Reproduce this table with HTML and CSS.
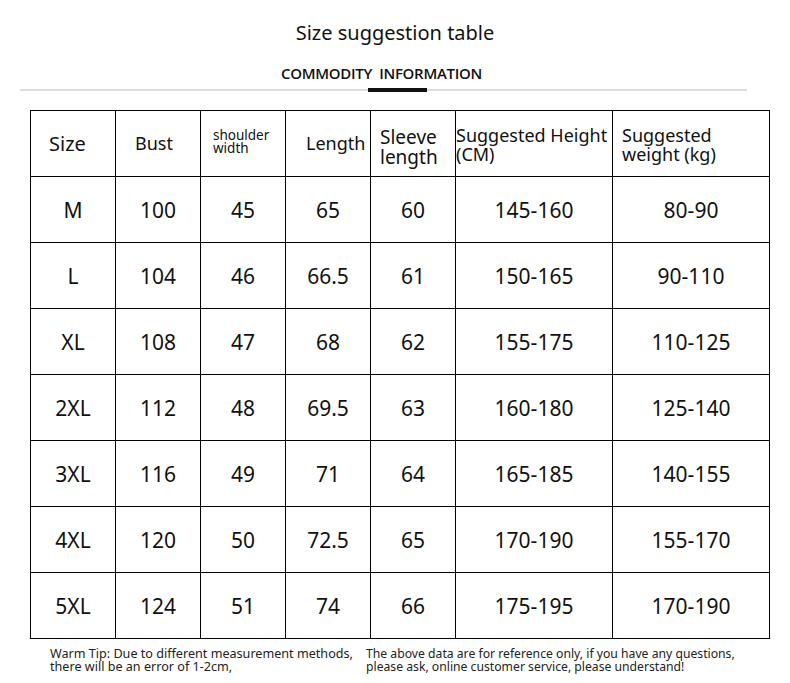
FILE: index.html
```html
<!DOCTYPE html>
<html>
<head>
<meta charset="utf-8">
<link rel="stylesheet" href="styles.css">
</head>
<body>
<div class="page">
  <h1 class="title">Size suggestion table</h1>
  <div class="subtitle">COMMODITY&nbsp; INFORMATION</div>
  <div class="rule"><span class="rule-bar"></span></div>
  <table class="sizes">
    <colgroup>
      <col class="c-n"><col class="c-n"><col class="c-n"><col class="c-n"><col class="c-n"><col class="c-w"><col class="c-w">
    </colgroup>
    <thead>
      <tr>
        <th class="h-size">Size</th>
        <th class="h-bust">Bust</th>
        <th class="h-shoulder">shoulder<br>width</th>
        <th class="h-length">Length</th>
        <th class="h-sleeve">Sleeve<br>length</th>
        <th class="h-height">Suggested Height<br>(CM)</th>
        <th class="h-weight">Suggested<br>weight (kg)</th>
      </tr>
    </thead>
    <tbody>
      <tr><td>M</td><td>100</td><td>45</td><td>65</td><td>60</td><td>145-160</td><td>80-90</td></tr>
      <tr><td>L</td><td>104</td><td>46</td><td>66.5</td><td>61</td><td>150-165</td><td>90-110</td></tr>
      <tr><td>XL</td><td>108</td><td>47</td><td>68</td><td>62</td><td>155-175</td><td>110-125</td></tr>
      <tr><td>2XL</td><td>112</td><td>48</td><td>69.5</td><td>63</td><td>160-180</td><td>125-140</td></tr>
      <tr><td>3XL</td><td>116</td><td>49</td><td>71</td><td>64</td><td>165-185</td><td>140-155</td></tr>
      <tr><td>4XL</td><td>120</td><td>50</td><td>72.5</td><td>65</td><td>170-190</td><td>155-170</td></tr>
      <tr><td>5XL</td><td>124</td><td>51</td><td>74</td><td>66</td><td>175-195</td><td>170-190</td></tr>
    </tbody>
  </table>
  <div class="notes">
    <p class="note note-left">Warm Tip: Due to different measurement methods,<br>there will be an error of 1-2cm,</p>
    <p class="note note-right">The above data are for reference only, if you have any questions,<br>please ask, online customer service, please understand!</p>
  </div>
</div>
</body>
</html>
```

FILE: styles.css
```css
html, body {
  margin: 0;
  padding: 0;
  background: #fff;
}
body {
  font-family: "Noto Sans", "Open Sans", sans-serif;
  color: #111;
}
.page {
  width: 790px;
  height: 683px;
  overflow: hidden;
}
.title {
  margin: 0;
  padding-top: 19px;
  height: 28px;
  line-height: 28px;
  font-size: 20px;
  font-weight: 400;
  text-align: center;
}
.subtitle {
  margin-top: 16px;
  padding-left: 281px;
  height: 20px;
  line-height: 20px;
  font-family: "Open Sans", "Noto Sans", sans-serif;
  font-size: 15px;
  font-weight: 600;
  letter-spacing: -0.3px;
  color: #111;
}
.rule {
  margin: 6px 0 0 20px;
  width: 727px;
  height: 2px;
  background: #dcdcdc;
  display: flex;
  justify-content: flex-start;
}
.rule-bar {
  margin-left: 348px;
  margin-top: -1px;
  width: 59px;
  height: 4px;
  background: #111;
}
.sizes {
  margin: 19px 0 0 30px;
  border-collapse: collapse;
  table-layout: fixed;
  width: 740px;
}
.c-n { width: 85px; }
.c-w { width: 157px; }
.sizes tr {
  height: 66px;
}
.sizes th, .sizes td {
  border: 1.5px solid #000;
  padding: 0;
  font-weight: 400;
  vertical-align: middle;
}
.sizes td {
  text-align: center;
  font-size: 21px;
}
.sizes th {
  text-align: left;
  font-size: 18px;
  line-height: 19px;
}
.sizes .h-size { padding-left: 18px; font-size: 20px; }
.sizes .h-bust { padding-left: 19px; font-size: 18px; }
.sizes .h-shoulder {
  padding-left: 12px;
  padding-bottom: 4px;
  font-size: 13.5px;
  line-height: 13px;
}
.sizes .h-length { padding-left: 20px; font-size: 18px; }
.sizes .h-sleeve { padding-left: 9px; font-size: 19px; line-height: 20px; padding-top: 6px; }
.sizes .h-height { padding-left: 0; padding-top: 2px; }
.sizes .h-weight { padding-left: 9px; padding-top: 2px; }
.notes {
  display: flex;
  margin: 8px 0 0 50px;
}
.note {
  margin: 0;
  line-height: 13px;
  color: #222;
}
.note-left { width: 316px; font-size: 12.6px; }
.note-right { font-size: 12.2px; }
```
